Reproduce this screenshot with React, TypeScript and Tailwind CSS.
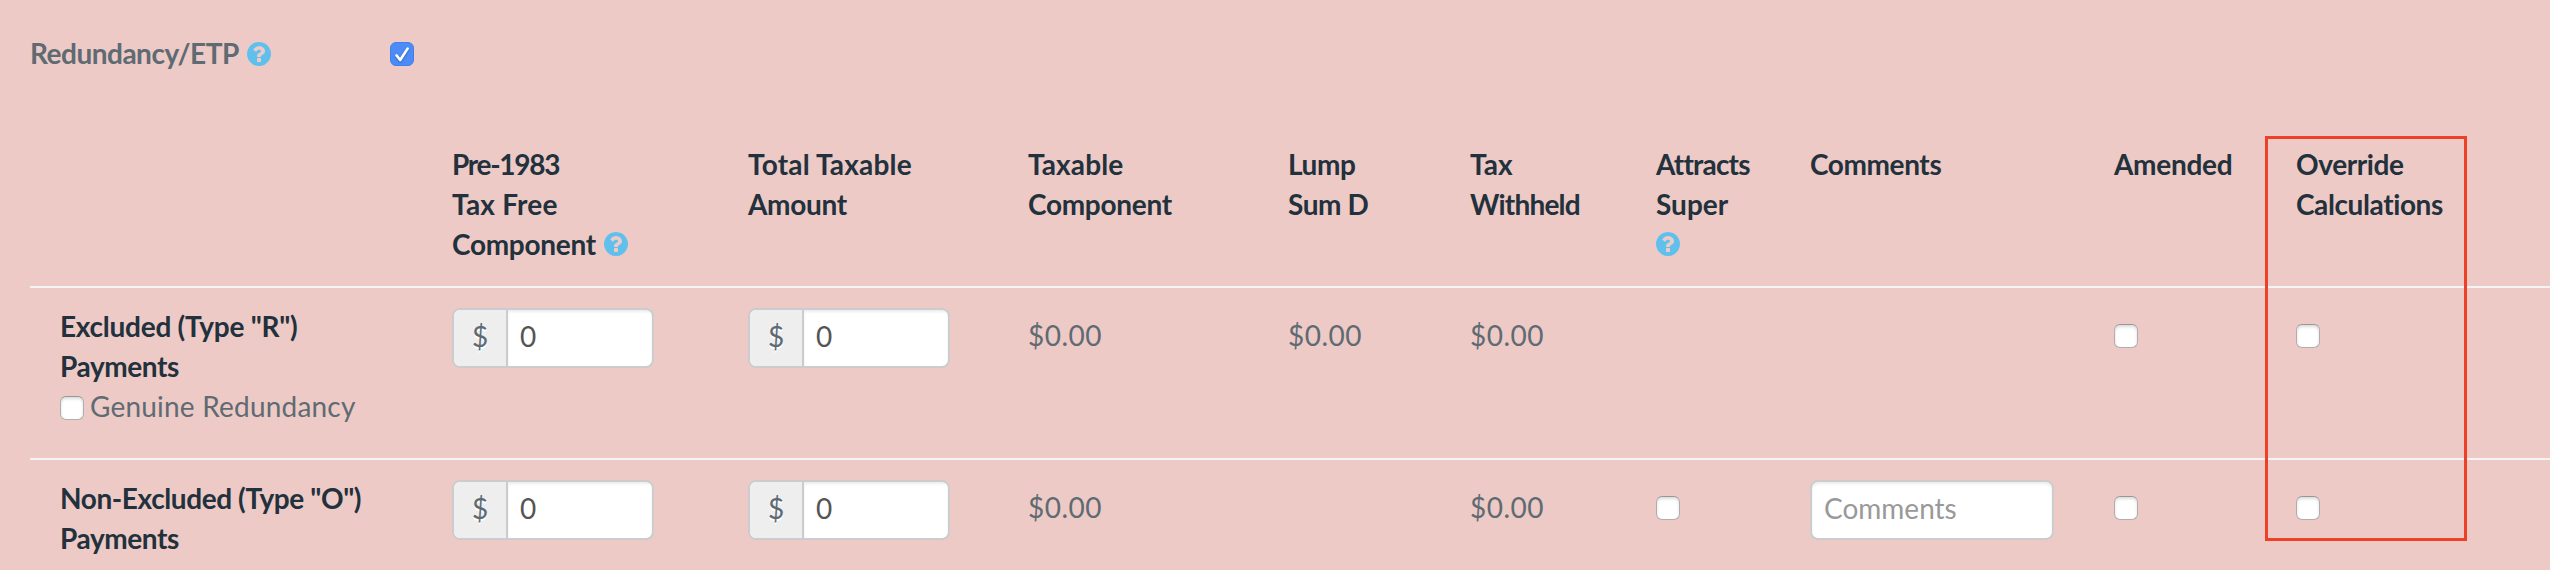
import React, { FC, ReactNode, memo, useState } from "react";

type PaymentRow = {
  id: string;
  title: ReactNode;
  genuineRedundancy?: boolean;
  taxableComponent: string;
  lumpSumD?: string;
  taxWithheld: string;
  attractsSuper?: boolean;
  comments?: boolean;
};

const rows: PaymentRow[] = [
  {
    id: "excluded",
    title: (
      <>
        <span className="tracking-[-0.25px]">Excluded (Type "R")</span>
        <br />
        <span className="tracking-[-0.4px]">Payments</span>
      </>
    ),
    genuineRedundancy: true,
    taxableComponent: "$0.00",
    lumpSumD: "$0.00",
    taxWithheld: "$0.00",
  },
  {
    id: "non-excluded",
    title: (
      <>
        <span className="tracking-[-0.4px]">Non-Excluded (Type "O")</span>
        <br />
        <span className="tracking-[-0.4px]">Payments</span>
      </>
    ),
    taxableComponent: "$0.00",
    taxWithheld: "$0.00",
    attractsSuper: true,
    comments: true,
  },
];

const gridCols = "grid grid-cols-[422px_296px_280px_260px_182px_186px_154px_304px_182px_1fr]";

const HelpIcon: FC<{ className?: string }> = ({ className = "" }) => (
  <svg viewBox="128 128 1536 1536" className={`h-6 w-6 shrink-0 fill-[#5fc0ee] ${className}`}>
    <path d="M1024 1376v-192q0-14-9-23t-23-9h-192q-14 0-23 9t-9 23v192q0 14 9 23t23 9h192q14 0 23-9t9-23zm256-672q0-88-55.5-163t-138.5-116-170-41q-243 0-371 213-15 24 8 42l132 100q7 6 19 6 16 0 25-12 53-68 86-92 34-24 86-24 48 0 85.5 26t37.5 59q0 38-20 61t-68 45q-63 28-115.5 86.5t-52.5 125.5v36q0 14 9 23t23 9h192q14 0 23-9t9-23q0-19 21.5-49.5t54.5-49.5q32-18 49-28.5t46-35 44.5-48 28-60.5 12.5-81zm384 192q0 209-103 385.5t-279.5 279.5-385.5 103-385.5-103-279.5-279.5-103-385.5 103-385.5 279.5-279.5 385.5-103 385.5 103 279.5 279.5 103 385.5z" />
  </svg>
);

const Checkbox: FC<{ defaultChecked?: boolean; className?: string }> = ({ defaultChecked = false, className = "" }) => {
  const [checked, setChecked] = useState(defaultChecked);
  return (
    <button
      type="button"
      role="checkbox"
      aria-checked={checked}
      onClick={() => setChecked(!checked)}
      className={`block h-6 w-6 shrink-0 rounded-[6px] border ${
        checked
          ? "border-[#4080ee] bg-[#4d8bf7]"
          : "border-[#b0aead] border-t-[#999796] bg-white shadow-[inset_0_2px_3px_rgba(0,0,0,0.14)]"
      } ${className}`}
    >
      {checked && (
        <svg viewBox="0 0 22 22" className="h-[22px] w-[22px] drop-shadow-[0_1px_1px_rgba(0,0,0,0.3)]" fill="none">
          <path
            d="M5.5 12.4 9.2 17 16.6 5.6"
            stroke="#fff"
            strokeWidth="2.6"
            strokeLinecap="round"
            strokeLinejoin="round"
          />
        </svg>
      )}
    </button>
  );
};

// 金額入力
const MoneyInput: FC = () => (
  <div className="flex h-[60px] w-[202px] overflow-hidden rounded-[8px] border-2 border-[#cacccd] bg-white">
    <span className="flex w-[54px] shrink-0 items-center justify-center border-r-2 border-[#cacccd] bg-[#eeeeee] pb-1 text-[#5d6a73] [text-shadow:0_2px_0_#fff]">
      $
    </span>
    <input
      defaultValue="0"
      className="w-[144px] bg-transparent pb-1 pl-3 text-[#555555] shadow-[inset_0_2px_3px_rgba(0,0,0,0.08)] outline-none"
    />
  </div>
);

const RedundancyTableMemo: FC = () => {
  return (
    <div className="relative h-[570px] w-full overflow-hidden bg-[#edcac6] pl-[30px] font-['Lato','Liberation_Sans',sans-serif] text-[28px] leading-[40px] text-[#5f6a72] [font-variant-ligatures:none]">
      <div className="flex h-[144px] items-start pt-[33px]">
        <div className="flex w-[360px] items-start">
          <span className="w-[217px] font-bold tracking-[-0.5px]">Redundancy/ETP</span>
          <HelpIcon className="mt-[9px]" />
        </div>
        <Checkbox defaultChecked className="mt-[9px]" />
      </div>

      {/* ヘッダー */}
      <div className={`${gridCols} h-[144px] border-b-2 border-[#f4f4f5] font-bold text-[#22313c]`}>
        <div />
        <div>
          <span className="tracking-[-1.3px]">Pre-1983</span>
          <br />
          <span className="tracking-[0.2px]">Tax Free</span>
          <br />
          <span className="flex">
            <span className="w-[152px] tracking-[-0.3px]">Component</span>
            <HelpIcon className="mt-2" />
          </span>
        </div>
        <div>
          <span className="tracking-[0.2px]">Total Taxable</span>
          <br />
          <span className="tracking-[-0.3px]">Amount</span>
        </div>
        <div>
          <span className="tracking-[0.1px]">Taxable</span>
          <br />
          <span className="tracking-[-0.3px]">Component</span>
        </div>
        <div className="tracking-[-0.4px]">
          Lump
          <br />
          Sum D
        </div>
        <div>
          Tax
          <br />
          <span className="tracking-[-0.8px]">Withheld</span>
        </div>
        <div className="tracking-[-0.8px]">
          Attracts
          <br />
          <span className="tracking-normal">Super</span>
          <br />
          <HelpIcon className="mt-2" />
        </div>
        <div className="tracking-[-0.4px]">Comments</div>
        <div className="tracking-[-0.3px]">Amended</div>
        <div className="tracking-[-0.4px]">
          Override
          <br />
          Calculations
        </div>
        <div />
      </div>

      {rows.map((row) => (
        <div key={row.id} className={`${gridCols} h-[172px] border-b-2 border-[#f4f4f5] pt-5`}>
          <div className="-mt-[2px] pl-[30px]">
            <div className="font-bold text-[#22313c]">{row.title}</div>
            {row.genuineRedundancy && (
              <label className="flex">
                <Checkbox className="mt-[10px]" />
                <span className="ml-[6px] tracking-[0.2px]">Genuine Redundancy</span>
              </label>
            )}
          </div>
          <MoneyInput />
          <MoneyInput />
          <div className="pt-[7px] tracking-[0.5px]">{row.taxableComponent}</div>
          <div className="pt-[7px] tracking-[0.5px]">{row.lumpSumD}</div>
          <div className="pt-[7px] tracking-[0.5px]">{row.taxWithheld}</div>
          <div className="pt-4">{row.attractsSuper && <Checkbox />}</div>
          <div>
            {row.comments && (
              <input
                placeholder="Comments"
                className="h-[60px] w-[244px] rounded-[8px] border-2 border-[#cacccd] bg-white px-3 pb-1 text-[#555555] shadow-[inset_0_2px_3px_rgba(0,0,0,0.08)] outline-none placeholder:text-[#999999]"
              />
            )}
          </div>
          <div className="pt-4">
            <Checkbox />
          </div>
          <div className="pt-4">
            <Checkbox />
          </div>
        </div>
      ))}

      {/* Override Calculations の強調枠 */}
      <div className="pointer-events-none absolute top-[136px] left-[2265px] h-[405px] w-[202px] border-[3px] border-[#ee4027]" />
    </div>
  );
};

const RedundancyTable = memo(RedundancyTableMemo);

export default function App() {
  return <RedundancyTable />;
}
